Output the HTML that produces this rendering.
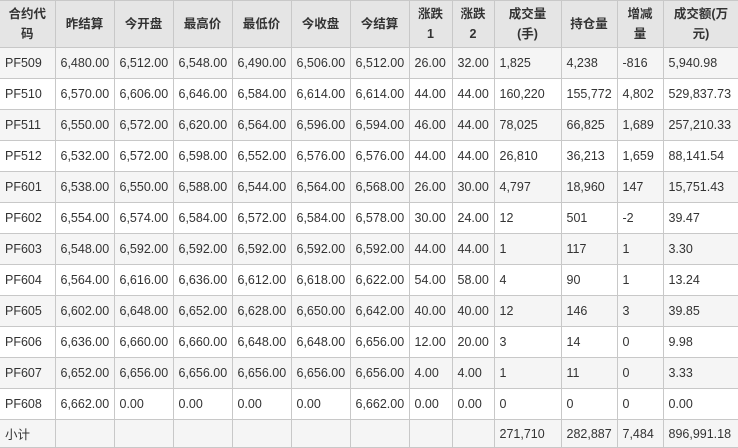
<!DOCTYPE html>
<html><head><meta charset="utf-8"><style>
body{margin:0;background:#fff;}
table{border-collapse:collapse;table-layout:fixed;width:739px;font-family:"Liberation Sans","Noto Sans CJK SC",sans-serif;font-size:12.5px;color:#333;}
td,th{border:1px solid #c8c8c8;padding:0 0 0 5px;text-align:left;white-space:nowrap;overflow:hidden;height:30px;}
th{background:#e5e5e5;font-weight:bold;text-align:center;padding:0;height:46px;line-height:20px;white-space:normal;font-size:12.5px;}
tr:nth-child(even) td{background:#f5f5f5;}
tr.s td{background:#f5f5f5;height:27px;}
td:first-child,th:first-child{border-left:none;}
</style></head><body>
<table>
<colgroup><col style="width:55px"><col style="width:59px"><col style="width:59px"><col style="width:59px"><col style="width:59px"><col style="width:59px"><col style="width:59px"><col style="width:43px"><col style="width:42px"><col style="width:67px"><col style="width:56px"><col style="width:46px"><col style="width:76px"></colgroup>
<tr><th>合约代<br>码</th><th>昨结算</th><th>今开盘</th><th>最高价</th><th>最低价</th><th>今收盘</th><th>今结算</th><th>涨跌<br>1</th><th>涨跌<br>2</th><th>成交量<br>(手)</th><th>持仓量</th><th>增减<br>量</th><th>成交额(万<br>元)</th></tr>
<tr><td>PF509</td><td>6,480.00</td><td>6,512.00</td><td>6,548.00</td><td>6,490.00</td><td>6,506.00</td><td>6,512.00</td><td>26.00</td><td>32.00</td><td>1,825</td><td>4,238</td><td>-816</td><td>5,940.98</td></tr>
<tr><td>PF510</td><td>6,570.00</td><td>6,606.00</td><td>6,646.00</td><td>6,584.00</td><td>6,614.00</td><td>6,614.00</td><td>44.00</td><td>44.00</td><td>160,220</td><td>155,772</td><td>4,802</td><td>529,837.73</td></tr>
<tr><td>PF511</td><td>6,550.00</td><td>6,572.00</td><td>6,620.00</td><td>6,564.00</td><td>6,596.00</td><td>6,594.00</td><td>46.00</td><td>44.00</td><td>78,025</td><td>66,825</td><td>1,689</td><td>257,210.33</td></tr>
<tr><td>PF512</td><td>6,532.00</td><td>6,572.00</td><td>6,598.00</td><td>6,552.00</td><td>6,576.00</td><td>6,576.00</td><td>44.00</td><td>44.00</td><td>26,810</td><td>36,213</td><td>1,659</td><td>88,141.54</td></tr>
<tr><td>PF601</td><td>6,538.00</td><td>6,550.00</td><td>6,588.00</td><td>6,544.00</td><td>6,564.00</td><td>6,568.00</td><td>26.00</td><td>30.00</td><td>4,797</td><td>18,960</td><td>147</td><td>15,751.43</td></tr>
<tr><td>PF602</td><td>6,554.00</td><td>6,574.00</td><td>6,584.00</td><td>6,572.00</td><td>6,584.00</td><td>6,578.00</td><td>30.00</td><td>24.00</td><td>12</td><td>501</td><td>-2</td><td>39.47</td></tr>
<tr><td>PF603</td><td>6,548.00</td><td>6,592.00</td><td>6,592.00</td><td>6,592.00</td><td>6,592.00</td><td>6,592.00</td><td>44.00</td><td>44.00</td><td>1</td><td>117</td><td>1</td><td>3.30</td></tr>
<tr><td>PF604</td><td>6,564.00</td><td>6,616.00</td><td>6,636.00</td><td>6,612.00</td><td>6,618.00</td><td>6,622.00</td><td>54.00</td><td>58.00</td><td>4</td><td>90</td><td>1</td><td>13.24</td></tr>
<tr><td>PF605</td><td>6,602.00</td><td>6,648.00</td><td>6,652.00</td><td>6,628.00</td><td>6,650.00</td><td>6,642.00</td><td>40.00</td><td>40.00</td><td>12</td><td>146</td><td>3</td><td>39.85</td></tr>
<tr><td>PF606</td><td>6,636.00</td><td>6,660.00</td><td>6,660.00</td><td>6,648.00</td><td>6,648.00</td><td>6,656.00</td><td>12.00</td><td>20.00</td><td>3</td><td>14</td><td>0</td><td>9.98</td></tr>
<tr><td>PF607</td><td>6,652.00</td><td>6,656.00</td><td>6,656.00</td><td>6,656.00</td><td>6,656.00</td><td>6,656.00</td><td>4.00</td><td>4.00</td><td>1</td><td>11</td><td>0</td><td>3.33</td></tr>
<tr><td>PF608</td><td>6,662.00</td><td>0.00</td><td>0.00</td><td>0.00</td><td>0.00</td><td>6,662.00</td><td>0.00</td><td>0.00</td><td>0</td><td>0</td><td>0</td><td>0.00</td></tr>
<tr class="s"><td>小计</td><td></td><td></td><td></td><td></td><td></td><td></td><td></td><td></td><td>271,710</td><td>282,887</td><td>7,484</td><td>896,991.18</td></tr>
</table>
</body></html>
